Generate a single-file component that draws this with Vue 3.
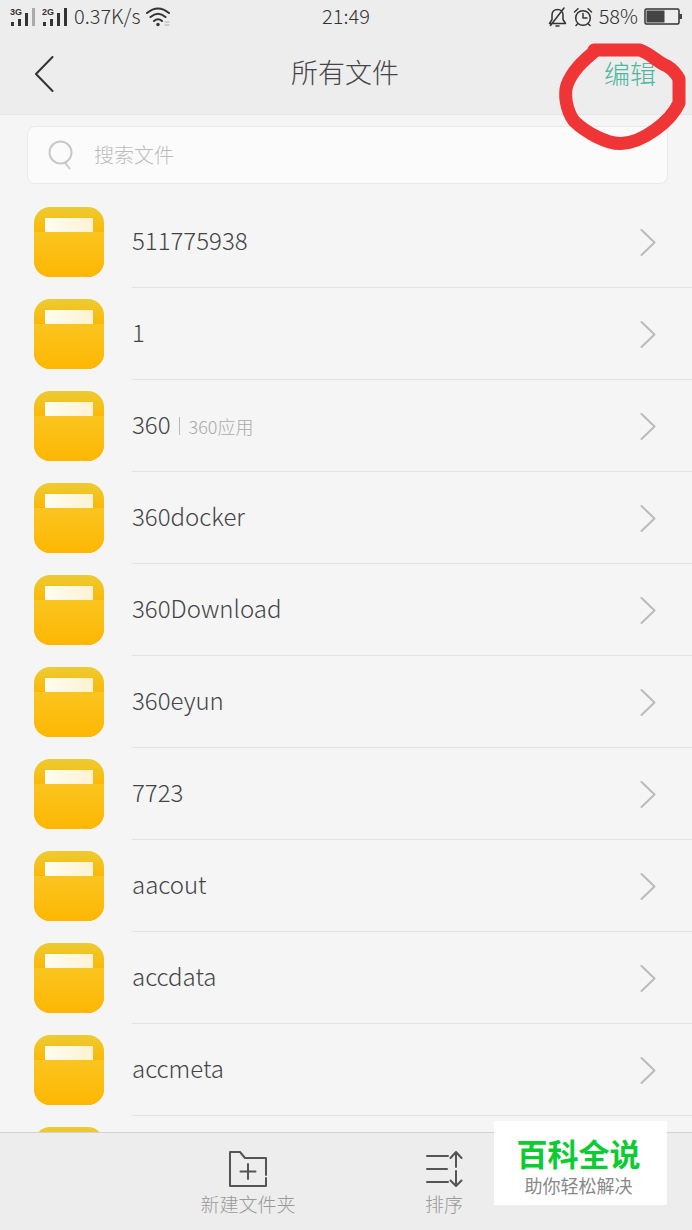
<template>
  <main class="files">
    <header class="top">
      <div class="status">
        <div class="status__side">
          <svg class="signal" width="26" height="20" viewBox="0 0 26 20" role="img" aria-label="3G">
            <text x="0" y="8">3G</text>
            <path d="M2.5 15v4M9.5 12v7M16.5 6v13" />
            <path class="signal__off" d="M23.5 1v18" />
          </svg>
          <svg class="signal" width="26" height="20" viewBox="0 0 26 20" role="img" aria-label="2G">
            <text x="0" y="8">2G</text>
            <path d="M2.5 15v4M9.5 12v7M16.5 6v13M23.5 1v18" />
          </svg>
          <span>0.37K/s</span>
          <svg class="wifi" width="24" height="20" viewBox="0 0 24 20" aria-hidden="true">
            <path d="M1 6Q12-3 23 6M4.500 10Q12 3.500 19.500 10M8 14Q12 10.500 16 14" />
            <circle cx="12" cy="17.500" r="1.700" />
            <path class="wifi__data" d="M19 15h4M19 18h4" />
          </svg>
        </div>
        <time>21:49</time>
        <div class="status__side status__side--end">
          <svg class="line-icon" width="19" height="20" viewBox="0 0 19 20" aria-hidden="true">
            <path d="M1.500 16.500h16l-2.500-4V8c0-3-2-5.500-5.500-5.500S4 5 4 8v4.500zM8 19h3M16 1L2.500 18.500" />
          </svg>
          <svg class="line-icon" width="20" height="20" viewBox="0 0 20 20" aria-hidden="true">
            <circle cx="10" cy="11" r="7.300" />
            <path d="M10 6.500V11h4M1.500 5L5 1.800M18.500 5L15 1.800M4.500 17L3 18.500M15.500 17l1.500 1.500" />
          </svg>
          <span>58%</span>
          <svg class="battery" width="38" height="18" viewBox="0 0 38 18" aria-hidden="true">
            <rect x="1" y="1" width="34" height="15" rx="1.500" />
            <path d="M2.500 2.500h18v12h-18zM35 6h3v5h-3z" />
          </svg>
        </div>
      </div>
      <nav class="bar">
        <button class="bar__back" type="button" aria-label="返回">
          <svg width="20" height="36" viewBox="0 0 20 36"><path d="M18.500 1L2 18l16.500 17" /></svg>
        </button>
        <h1>所有文件</h1>
        <button class="bar__edit" type="button">编辑</button>
      </nav>
    </header>

    <label class="search">
      <svg width="26" height="30" viewBox="0 0 26 30" aria-hidden="true">
        <circle cx="12.500" cy="12.500" r="11" />
        <path d="M17 22.500l4.500 6" />
      </svg>
      <input v-model="keyword" type="search" placeholder="搜索文件" aria-label="搜索文件" />
    </label>

    <ul class="list">
      <li v-for="folder in visibleFolders" :key="folder.name">
        <a class="row" href="#">
          <svg class="row__folder" width="70" height="70" viewBox="0 0 70 70" aria-hidden="true">
            <defs>
              <linearGradient id="folder-back" x1="0" y1="0" x2="0" y2="1">
                <stop offset="0" stop-color="#eccb32" />
                <stop offset=".36" stop-color="#fbb806" />
              </linearGradient>
              <linearGradient id="folder-front" x1="0" y1="0" x2="0" y2="1">
                <stop offset="0" stop-color="#fac41f" />
                <stop offset="1" stop-color="#feb703" />
              </linearGradient>
              <linearGradient id="folder-paper" x1="0" y1="0" x2="1" y2="0">
                <stop offset="0" stop-color="#fffdf2" />
                <stop offset="1" stop-color="#fdf3d2" />
              </linearGradient>
            </defs>
            <rect width="70" height="70" rx="16" fill="url(#folder-back)" />
            <path d="M0 25h70v29a16 16 0 0 1-16 16H16A16 16 0 0 1 0 54z" fill="url(#folder-front)" />
            <path d="M11 11h48v14H11z" fill="url(#folder-paper)" />
          </svg>
          <span class="row__body">
            <span class="row__name">{{ folder.name }}</span>
            <span v-if="folder.note" class="row__note">{{ folder.note }}</span>
            <svg class="row__arrow" width="16" height="28" viewBox="0 0 16 28" aria-hidden="true">
              <path d="M1.500 2L14.500 14.500 1.500 27" />
            </svg>
          </span>
        </a>
      </li>
    </ul>

    <footer class="tools">
      <button type="button">
        <svg width="38" height="36" viewBox="0 0 38 36" aria-hidden="true">
          <path d="M37 24V7H16l-5-6H1v34h36v-8M19 13v15M11.500 20.500h15" />
        </svg>
        <span>新建文件夹</span>
      </button>
      <button type="button">
        <svg width="38" height="36" viewBox="0 0 38 36" aria-hidden="true">
          <path d="M2 5h21M2 18h20M2 31h21M31 16V1M25.500 7L31 1l5.500 6M31 20v15M25.500 29.500L31 35l5.500-5.500" />
        </svg>
        <span>排序</span>
      </button>
    </footer>

    <svg class="marker" width="140" height="160" viewBox="0 0 140 160" aria-hidden="true">
      <path d="M42 50H88C99 54 105 62 115 66Q123 71 127 79V103C119 121 91 143 69 143.500C55 144 33 132 22 121C14 110 12 94 15 85C20 71 31 61 43 51" />
    </svg>
    <aside class="brand">
      <strong>百科全说</strong>
      <span>助你轻松解决</span>
    </aside>
  </main>
</template>

<script setup>
import { computed, ref } from 'vue'

const keyword = ref('')

const folders = [
  { name: '511775938' },
  { name: '1' },
  { name: '360', note: '360应用' },
  { name: '360docker' },
  { name: '360Download' },
  { name: '360eyun' },
  { name: '7723' },
  { name: 'aacout' },
  { name: 'accdata' },
  { name: 'accmeta' },
  { name: '' }
]

const visibleFolders = computed(() => folders.filter((folder) => folder.name.includes(keyword.value)))
</script>

<style>
body {
  margin: 0;
  background: #f5f5f5;
}
</style>

<style scoped>
.files {
  position: relative;
  display: flex;
  flex-direction: column;
  height: 100vh;
  overflow: hidden;
  background: #f5f5f5;
  color: #444;
  font-family: "Noto Sans CJK SC", sans-serif;
  font-weight: 300;
}

svg {
  flex: none;
  fill: none;
  stroke-linecap: round;
  stroke-linejoin: round;
}

button {
  padding: 0;
  border: 0;
  background: none;
  color: inherit;
  font: inherit;
  cursor: pointer;
}

.top {
  flex: none;
  border-bottom: 1px solid #e6e6e6;
  background: #ededed;
}

.status {
  display: grid;
  grid-template-columns: 1fr auto 1fr;
  align-items: center;
  height: 34px;
  padding: 0 10px;
  color: #333;
  font-size: 20px;
  line-height: 32px;
}

.status time,
.status span {
  padding-bottom: 2px;
}

.status__side {
  display: flex;
  align-items: center;
  gap: 6px;
}

.status__side--end {
  justify-content: flex-end;
}

.signal {
  stroke: #333;
  stroke-width: 3;
  stroke-linecap: butt;
}

.signal text {
  fill: #333;
  stroke: none;
  font: bold 9px "Liberation Sans", sans-serif;
}

.signal__off {
  stroke: #aaa;
}

.wifi {
  stroke: #333;
  stroke-width: 2;
}

.wifi circle {
  fill: #333;
  stroke: none;
}

.wifi .wifi__data {
  stroke: #aaa;
  stroke-width: 1;
}

.line-icon {
  stroke: #333;
  stroke-width: 1.5;
}

.battery rect {
  stroke: #333;
  stroke-width: 1.5;
}

.battery path {
  fill: #444;
}

.bar {
  display: grid;
  grid-template-columns: 1fr auto 1fr;
  align-items: center;
  height: 80px;
  padding: 0 36px 0 34px;
}

.bar__back {
  display: flex;
  justify-self: start;
}

.bar__back svg {
  stroke: #333;
  stroke-width: 2;
}

.bar h1 {
  margin: 0;
  padding-bottom: 4px;
  font-size: 27px;
  font-weight: 300;
  line-height: 40px;
}

.bar__edit {
  justify-self: end;
  padding-bottom: 2px;
  color: #4db6a0;
  font-size: 26px;
  line-height: 40px;
}

.search {
  display: flex;
  flex: none;
  align-items: center;
  gap: 20px;
  box-sizing: border-box;
  height: 58px;
  margin: 11px 24px 12px 27px;
  padding: 0 20px;
  border: 1px solid #e9e9e9;
  border-radius: 8px;
  background: #fbfbfb;
}

.search svg {
  stroke: #c8c8c8;
  stroke-width: 2;
}

.search input {
  flex: 1;
  min-width: 0;
  padding: 0 0 2px;
  border: 0;
  outline: 0;
  background: none;
  color: #444;
  font: inherit;
  font-size: 20px;
}

.search input::placeholder {
  color: #bbb;
  opacity: 1;
}

.list {
  flex: 1;
  min-height: 0;
  margin: 0;
  padding: 0;
  overflow: hidden;
  list-style: none;
}

.row {
  display: flex;
  align-items: center;
  gap: 28px;
  height: 92px;
  padding-left: 34px;
  color: inherit;
  text-decoration: none;
}

.row__body {
  display: flex;
  flex: 1;
  align-items: center;
  box-sizing: border-box;
  height: 92px;
  padding-right: 36px;
  border-bottom: 1px solid #e2e2e2;
}

.row__name {
  padding-bottom: 4px;
  font-size: 24px;
  line-height: 40px;
}

.row__note {
  margin-left: 8px;
  padding-left: 9px;
  border-left: 1px solid #bbb;
  color: #aaa;
  font-size: 18px;
  line-height: 18px;
}

.row__arrow {
  margin-left: auto;
  stroke: #bbb;
  stroke-width: 2;
}

.tools {
  display: flex;
  flex: none;
  justify-content: center;
  box-sizing: border-box;
  height: 98px;
  border-top: 1px solid #d2d2d2;
  background: #ededed;
}

.tools button {
  display: flex;
  flex-direction: column;
  align-items: center;
  gap: 4px;
  width: 196px;
  padding-top: 18px;
  color: #999;
  font-size: 19px;
  line-height: 26px;
}

.tools svg {
  stroke: #555;
  stroke-width: 2;
}

.marker {
  position: absolute;
  top: 0;
  right: 0;
  stroke: #ef3535;
  stroke-width: 13;
  pointer-events: none;
}

.brand {
  position: absolute;
  right: 25px;
  bottom: 25px;
  display: flex;
  flex-direction: column;
  align-items: center;
  box-sizing: border-box;
  width: 173px;
  height: 84px;
  padding: 12px 4px 0 0;
  background: #fff;
  color: #888;
  font-size: 18px;
  font-weight: 400;
  line-height: 24px;
}

.brand strong {
  color: #0ccb33;
  font-size: 31px;
  font-weight: 700;
  line-height: 40px;
}
</style>
